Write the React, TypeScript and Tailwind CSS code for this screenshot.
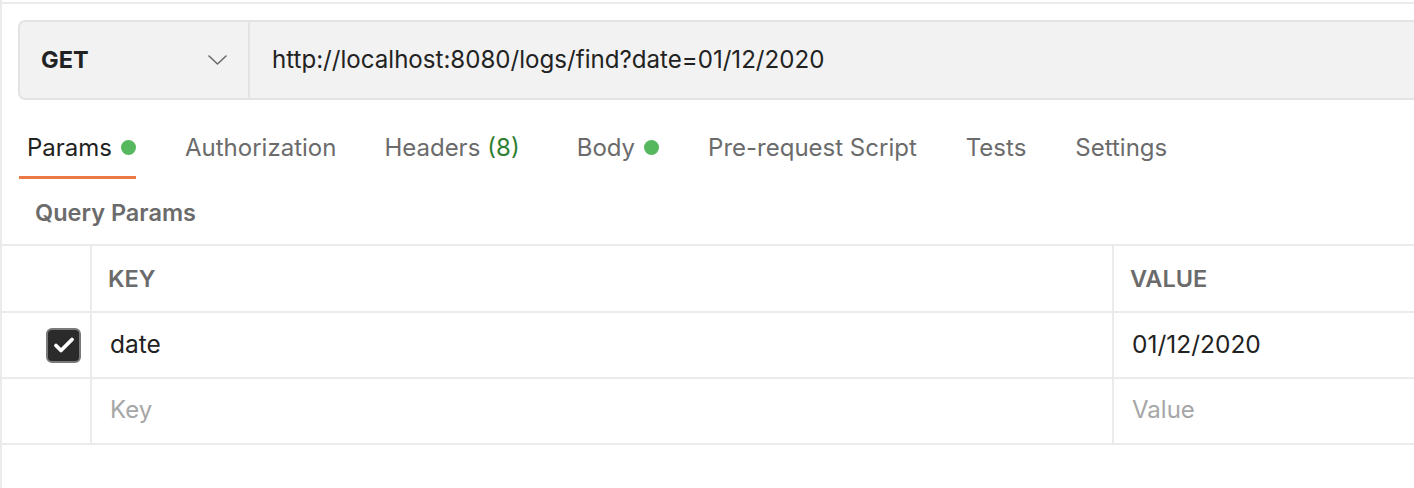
import React from "react";

const font = { fontFamily: "Inter, 'Noto Sans', sans-serif" };

function Dot() {
  return <span className="ml-[9px] inline-block h-[15px] w-[15px] rounded-full bg-[#55b85f]" />;
}

function Chevron() {
  return (
    <svg width="19" height="10" viewBox="0 0 19 10" fill="none">
      <path d="M1 1l8.5 8 8.5-8" stroke="#6b6b6b" strokeWidth="1.6" strokeLinecap="round" strokeLinejoin="round" />
    </svg>
  );
}

function Checkbox() {
  return (
    <div className="flex h-[35px] w-[35px] items-center justify-center rounded-[6px] border-2 border-[#7a7a7a] bg-[#2b2b2b]">
      <svg width="22" height="18" viewBox="0 0 22 18" fill="none">
        <path d="M3 9.5l5 5L19 3.5" stroke="white" strokeWidth="3.8" strokeLinecap="round" strokeLinejoin="round" />
      </svg>
    </div>
  );
}

export default function App() {
  return (
    <div className="h-[488px] w-[1414px] overflow-hidden border-l-2 border-[#ebebeb] bg-white" style={font}>
      <div className="pt-[2px]">
        <div className="h-[2px] bg-[#ebebeb]" />
      </div>
      <div className="pl-[16px] pt-[16px]">
        <div className="flex h-[80px] w-[1420px] rounded-l-[7px] border-2 border-[#e3e3e3] bg-[#f2f2f2]">
          <div className="flex w-[230px] items-center justify-between border-r-2 border-[#e3e3e3] pl-[21px] pr-[21px]">
            <span className="text-[23.5px] font-bold text-[#222]">GET</span>
            <Chevron />
          </div>
          <div className="flex items-center pl-[22px] text-[24.1px] text-[#222]">
            http://localhost:8080/logs/find?date=01/12/2020
          </div>
        </div>
      </div>
      <div className="flex h-[79px] items-end pl-[17px] text-[24px] text-[#6b6b6b]">
        <div className="flex h-[60px] items-center border-b-[3px] border-[#ec7a47] pl-[8px] text-[#222]">
          Params
          <Dot />
        </div>
        <div className="flex h-[60px] items-center pb-[3px] pl-[49px]">Authorization</div>
        <div className="flex h-[60px] items-center pb-[3px] pl-[48px]">
          Headers<span className="ml-[7px] text-[#2f8032]">(8)</span>
        </div>
        <div className="flex h-[60px] items-center pb-[3px] pl-[57px]">
          Body
          <Dot />
        </div>
        <div className="flex h-[60px] items-center pb-[3px] pl-[49px]">Pre-request Script</div>
        <div className="flex h-[60px] items-center pb-[3px] pl-[49px]">Tests</div>
        <div className="flex h-[60px] items-center pb-[3px] pl-[49px]">Settings</div>
      </div>
      <div className="flex h-[65px] items-center pl-[33px] pt-[3px] text-[23.5px] font-semibold text-[#6b6b6b]">Query Params</div>
      <div className="border-t-2 border-[#ebebeb]">
        <div className="flex h-[67px] border-b-2 border-[#ebebeb]">
          <div className="w-[90px] border-r-2 border-[#ebebeb]" />
          <div className="flex w-[1022px] items-center border-r-2 border-[#ebebeb] pl-[16px] text-[23.5px] font-semibold text-[#6b6b6b]">KEY</div>
          <div className="flex items-center pl-[16px] text-[23.5px] font-semibold text-[#6b6b6b]">VALUE</div>
        </div>
        <div className="flex h-[66px] border-b-2 border-[#ebebeb]">
          <div className="flex w-[90px] items-center justify-end border-r-2 border-[#ebebeb] pr-[9px]">
            <Checkbox />
          </div>
          <div className="flex w-[1022px] items-center border-r-2 border-[#ebebeb] pb-[2px] pl-[18px] text-[24.5px] text-[#222]">date</div>
          <div className="flex items-center pb-[2px] pl-[18px] text-[24.5px] text-[#222]">01/12/2020</div>
        </div>
        <div className="flex h-[66px] border-b-2 border-[#ebebeb]">
          <div className="w-[90px] border-r-2 border-[#ebebeb]" />
          <div className="flex w-[1022px] items-center border-r-2 border-[#ebebeb] pb-[2px] pl-[18px] text-[24px] text-[#a6a6a6]">Key</div>
          <div className="flex items-center pb-[2px] pl-[18px] text-[24px] text-[#a6a6a6]">Value</div>
        </div>
      </div>
    </div>
  );
}
